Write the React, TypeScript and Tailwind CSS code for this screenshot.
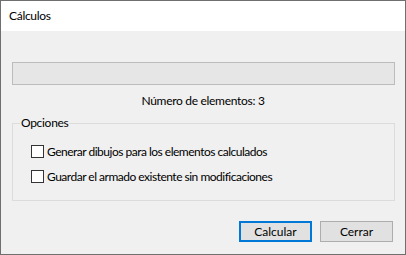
const font = { fontFamily: '"Segoe UI", Lato, "Noto Sans", sans-serif' }

const Checkbox = ({ label }: { label: string }) => (
  <label className="flex items-center h-[13px] gap-[3px] text-[12px] tracking-[-0.5px] text-black">
    <span className="w-[13px] h-[13px] border border-[#333] bg-white shrink-0" />
    <span className="leading-none">{label}</span>
  </label>
)

export default function App() {
  return (
    <div
      className="w-[406px] h-[255px] border border-[#6f6f6f] bg-[#f0f0f0] flex flex-col"
      style={font}
    >
      <div className="h-[30px] bg-white flex items-center pl-[8px] text-[12px] tracking-[-0.3px] text-black">
        Cálculos
      </div>

      <div className="flex-1 flex flex-col px-[11px] pt-[31px]">
        <div className="h-[23px] w-[383px] border border-[#bcbcbc] bg-[#e6e6e6]" />

        <div className="mt-[9px] h-[14px] flex justify-center text-[12px] leading-[14px] tracking-[-0.3px] text-black">
          Número de elementos: 3
        </div>

        <div className="relative mt-[15px] w-[383px] h-[78px] border border-[#dcdcdc]">
          <span className="absolute left-[7px] top-[-9px] px-[1px] bg-[#f0f0f0] text-[12px] leading-[16px] tracking-[-0.3px] text-black">
            Opciones
          </span>
          <div className="flex flex-col gap-[12px] pl-[18px] pt-[21px]">
            <Checkbox label="Generar dibujos para los elementos calculados" />
            <Checkbox label="Guardar el armado existente sin modificaciones" />
          </div>
        </div>

        <div className="flex justify-end gap-[8px] mt-[20px] pr-[1px]">
          <button className="w-[73px] h-[21px] border-2 border-[#0078d7] bg-[#e1e1e1] text-[12px] text-black leading-none">
            Calcular
          </button>
          <button className="w-[73px] h-[21px] border border-[#adadad] bg-[#e1e1e1] text-[12px] text-black leading-none">
            Cerrar
          </button>
        </div>
      </div>
    </div>
  )
}
